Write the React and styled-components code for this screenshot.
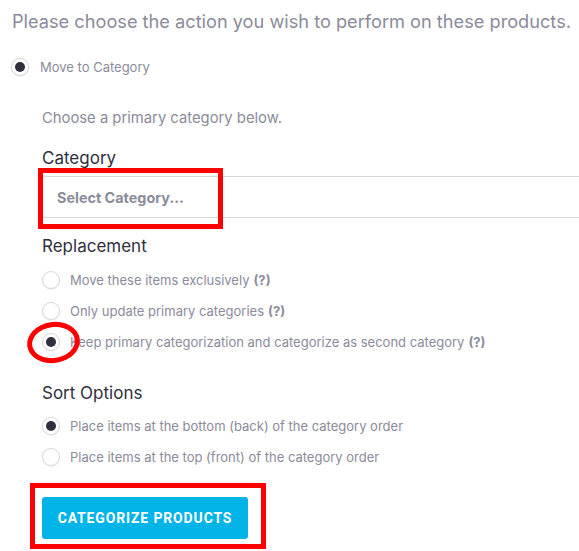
import React from 'react';
import styled, { createGlobalStyle } from 'styled-components';

const GlobalStyle = createGlobalStyle`
  html {
    overflow: hidden;
  }
  html, body {
    margin: 0;
    padding: 0;
    background: #ffffff;
  }
  body {
    font-family: Inter, "Noto Sans", sans-serif;
  }
`;

const Page = styled.div`
  padding: 8px 0 12px 11px;
  width: 579px;
  box-sizing: border-box;
`;

const Title = styled.h2`
  margin: 0;
  font-size: 18.2px;
  line-height: 26px;
  font-weight: 400;
  color: #8b8b9b;
  padding-left: 1px;
  white-space: nowrap;
`;

const Row = styled.label`
  display: flex;
  align-items: center;
  height: 24px;
  gap: ${p => p.$gap || 10}px;
  margin-top: ${p => p.$top || 0}px;
  font-size: 13px;
  color: #8b8b9b;
  white-space: nowrap;
`;

const Radio = styled.span`
  position: relative;
  width: 18px;
  height: 18px;
  box-sizing: border-box;
  border-radius: 50%;
  border: 1px solid #d6d6dc;
  box-shadow: 0 1px 1px rgba(0, 0, 0, 0.06);
  background: #fff;
  display: flex;
  align-items: center;
  justify-content: center;
  flex-shrink: 0;

  &::after {
    content: '';
    width: 10px;
    height: 10px;
    border-radius: 50%;
    background: #2f2f3d;
    display: ${p => (p.$checked ? 'block' : 'none')};
  }
`;

const Hint = styled.b`
  font-weight: 700;
  margin-left: 4px;
`;

const Section = styled.div`
  padding-left: 31px;
`;

const Intro = styled.p`
  margin: 29px 0 0;
  font-size: 14.8px;
  line-height: 20px;
  color: #8b8b9b;
`;

const Heading = styled.h3`
  margin: ${p => p.$top || 0}px 0 0;
  font-size: 17px;
  line-height: 22px;
  font-weight: 400;
  color: #2f2f3d;
`;

const SelectWrap = styled.div`
  position: relative;
  margin-top: 7px;
  margin-right: -20px;
`;

const Select = styled.div`
  height: 42px;
  box-sizing: border-box;
  border: 1px solid #d8d8dc;
  border-radius: 3px 0 0 3px;
  display: flex;
  align-items: center;
  padding-left: 14px;
  font-size: 14.4px;
  font-weight: 700;
  color: #8b8b9b;
`;

const List = styled.div`
  display: flex;
  flex-direction: column;
  gap: 7px;
  margin-top: ${p => p.$top || 0}px;
`;

const Marker = styled.div`
  position: relative;
  flex-shrink: 0;
`;

const ButtonWrap = styled.div`
  position: relative;
  display: inline-block;
  margin-top: 28px;
`;

const Button = styled.button`
  display: block;
  height: 42px;
  width: 206px;
  border: none;
  border-radius: 3px;
  background: #00b4e8;
  color: #ffffff;
  font-family: Roboto, "Liberation Sans", sans-serif;
  font-weight: 700;
  font-size: 14px;
  letter-spacing: 0.85px;
  text-transform: uppercase;
  cursor: pointer;
`;

const RedBox = styled.span`
  position: absolute;
  left: ${p => p.$x}px;
  top: ${p => p.$y}px;
  width: ${p => p.$w}px;
  height: ${p => p.$h}px;
  box-sizing: border-box;
  border: 5px solid #ff0000;
  border-radius: ${p => (p.$round ? '50%' : '0')};
  transform: rotate(${p => p.$rot || 0}deg);
  pointer-events: none;
`;

const replacement = [
  { label: 'Move these items exclusively', checked: false },
  { label: 'Only update primary categories', checked: false },
  { label: 'Keep primary categorization and categorize as second category', checked: true, circled: true },
];

const sorts = [
  { label: 'Place items at the bottom (back) of the category order', checked: true },
  { label: 'Place items at the top (front) of the category order', checked: false },
];

export default function App() {
  return (
    <>
      <GlobalStyle />
      <Page>
        <Title>Please choose the action you wish to perform on these products.</Title>
        <Row $top={21} $gap={11}>
          <Radio $checked />
          Move to Category
        </Row>
        <Section>
          <Intro>Choose a primary category below.</Intro>
          <Heading $top={19}>Category</Heading>
          <SelectWrap>
            <Select>Select Category...</Select>
            <RedBox $x={-4} $y={-8} $w={185} $h={61} />
          </SelectWrap>
          <Heading $top={17}>Replacement</Heading>
          <List $top={11}>
            {replacement.map(r => (
              <Row key={r.label}>
                <Marker>
                  <Radio $checked={r.checked} />
                  {r.circled && <RedBox $round $x={-15} $y={-11} $w={53} $h={41} $rot={-8} />}
                </Marker>
                <span>
                  {r.label}
                  <Hint>(?)</Hint>
                </span>
              </Row>
            ))}
          </List>
          <Heading $top={28}>Sort Options</Heading>
          <List $top={10}>
            {sorts.map(r => (
              <Row key={r.label}>
                <Radio $checked={r.checked} />
                {r.label}
              </Row>
            ))}
          </List>
          <ButtonWrap>
            <Button>Categorize Products</Button>
            <RedBox $x={-12} $y={-14} $w={236} $h={66} />
          </ButtonWrap>
        </Section>
      </Page>
    </>
  );
}
